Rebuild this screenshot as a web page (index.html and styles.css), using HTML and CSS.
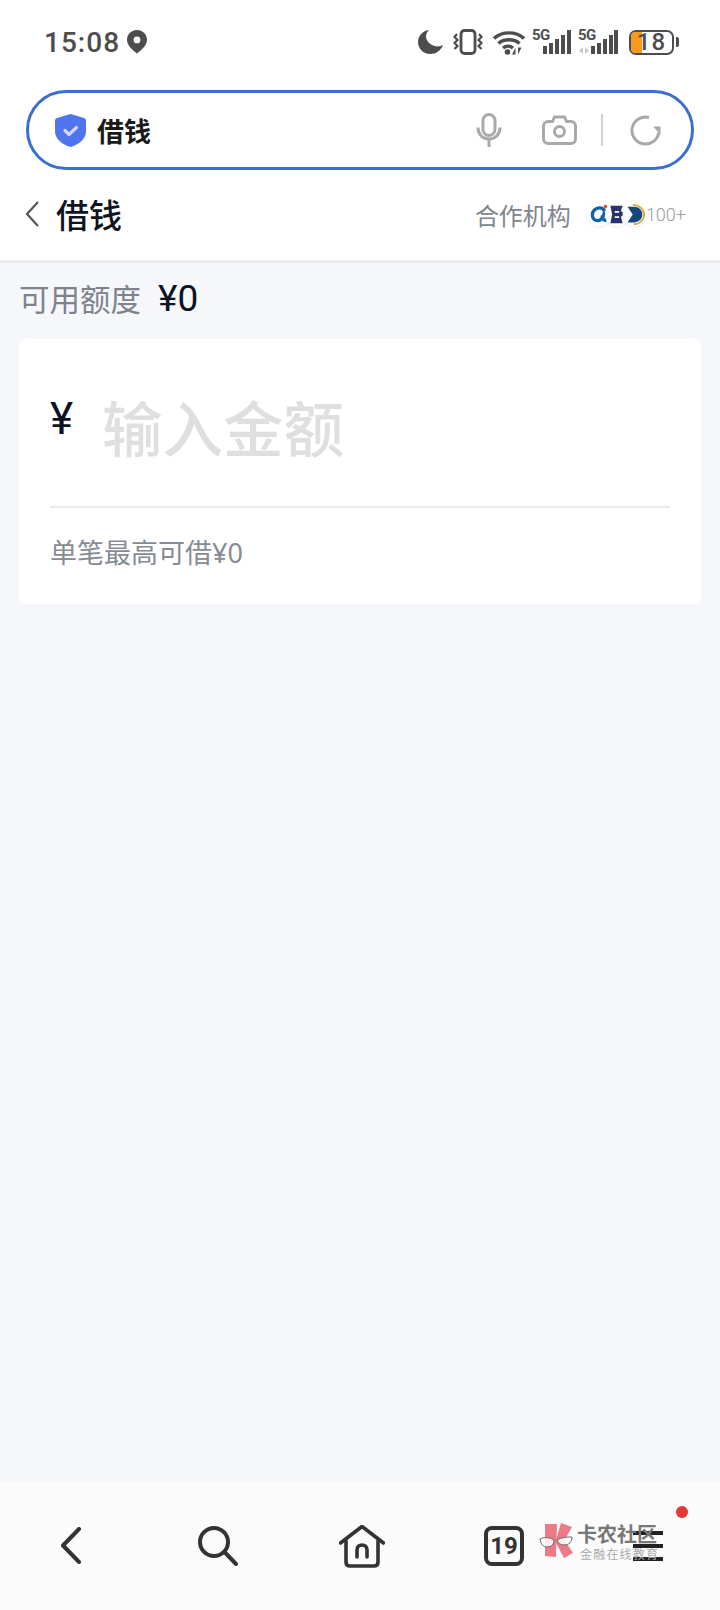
FILE: index.html
```html
<!DOCTYPE html>
<html lang="zh-CN">

<head>
    <meta charset="UTF-8">
    <meta name="viewport" content="width=device-width, initial-scale=1.0">
    <title>借钱</title>
    <link rel="stylesheet" href="styles.css">
</head>

<body>
    <div class="top-area">
        <!-- 状态栏 -->
        <div class="status-bar">
            <div class="status-left">
                <span class="clock">15:08</span>
                <svg class="pin" width="20" height="24" viewBox="0 0 20 24">
                    <path fill="#4d4d4d" fill-rule="evenodd" d="M10 0C4.500 0 0 4.300 0 9.800c0 6 6.200 10.600 10 13.800 3.800-3.200 10-7.800 10-13.800C20 4.300 15.500 0 10 0zm0 6.500a3.400 3.400 0 1 1 0 6.800 3.400 3.400 0 0 1 0-6.800z"/>
                </svg>
            </div>
            <div class="status-right">
                <svg class="moon" width="26" height="24" viewBox="0 0 26 24">
                    <path fill="#4d4d4d" d="M11 0C4.800.8 0 5.800 0 12c0 6.600 5.400 12 12 12 6 0 11-3.400 13-9-1.800 1-3.800 1.500-5.800 1.400C12.600 16.200 8 10.800 8 6.500 8 4 9.200 1.800 11 0z"/>
                </svg>
                <svg class="vibrate" width="30" height="26" viewBox="0 0 30 26">
                    <rect x="8" y="1.500" width="14" height="23" rx="3.500" fill="none" stroke="#4d4d4d" stroke-width="2.800"/>
                    <path fill="none" stroke="#4d4d4d" stroke-width="2.200" d="M4 5 1.500 8 4.500 11 1.500 14 4.500 17 1.500 20M26 5l2.500 3-3 3 3 3-3 3 3 3"/>
                </svg>
                <svg class="wifi" width="32" height="25" viewBox="0 0 32 25">
                    <g fill="none" stroke="#4d4d4d" stroke-width="3.400">
                        <path d="M1 8.500C9 1 23 1 31 8.500"/>
                        <path d="M5.500 13.500C11 8.500 21 8.500 26.500 13.500"/>
                        <path d="M10 18c3-2.500 7-2.500 10 0"/>
                    </g>
                    <circle cx="14.500" cy="22" r="2.800" fill="#4d4d4d"/>
                    <path fill="#4d4d4d" d="M22.500 24.500v-7l-3.500 7zM25 17.500v7l3.500-7z"/>
                </svg>
                <div class="signal">
                    <span class="sim-label">5G</span>
                    <svg width="39" height="25" viewBox="0 0 39 25">
                        <g fill="#4d4d4d">
                            <rect x="10" y="16" width="4" height="8"/>
                            <rect x="16" y="13" width="4" height="11"/>
                            <rect x="22" y="9" width="4" height="15"/>
                            <rect x="28" y="5" width="4" height="19"/>
                            <rect x="34" y="0" width="4" height="24"/>
                        </g>
                    </svg>
                </div>
                <div class="signal">
                    <span class="sim-label">5G</span>
                    <svg width="42" height="25" viewBox="0 0 42 25">
                        <path fill="#c9c9c9" d="M7 17v7l-4-3.500zM9 17v7l4-3.500z"/>
                        <g fill="#4d4d4d">
                            <rect x="15" y="16" width="4" height="8"/>
                            <rect x="21" y="13" width="4" height="11"/>
                            <rect x="27" y="9" width="4" height="15"/>
                            <rect x="33" y="5" width="4" height="19"/>
                            <rect x="38" y="0" width="4" height="24"/>
                        </g>
                    </svg>
                </div>
                <div class="battery">
                    <div class="battery-body">
                        <span class="battery-fill"></span>
                        <span class="battery-num">18</span>
                    </div>
                    <span class="battery-cap"></span>
                </div>
            </div>
        </div>

        <!-- 搜索框 -->
        <div class="search-box">
            <svg class="shield" width="31" height="33" viewBox="0 0 31 33">
                <path fill="#5073ee" d="M15.500 0 29 4c1.300.4 2 1.300 2 2.600V17c0 8-7 13.500-15.500 16C7 30.500 0 25 0 17V6.600C0 5.300.7 4.400 2 4z"/>
                <path fill="none" stroke="#cfd8fb" stroke-width="3.200" stroke-linecap="round" stroke-linejoin="round" d="M10 16.500l4 4 7.500-7"/>
            </svg>
            <span class="search-text">借钱</span>
            <svg class="mic" width="26" height="34" viewBox="0 0 26 34">
                <g fill="none" stroke="#a9a9a9" stroke-width="3">
                    <rect x="7" y="1.500" width="12" height="21" rx="6"/>
                    <path d="M2 14.500C2 21 6.500 26 13 26s11-5 11-11.500M13 26v8"/>
                </g>
            </svg>
            <svg class="camera" width="35" height="30" viewBox="0 0 35 30">
                <g fill="none" stroke="#a9a9a9" stroke-width="3">
                    <path d="M6 6.500h4.500l2-4.500h10l2 4.500H29c2.500 0 4.500 2 4.500 4.500v13c0 2.500-2 4.500-4.500 4.500H6c-2.500 0-4.500-2-4.500-4.500V11c0-2.500 2-4.500 4.500-4.500z"/>
                    <circle cx="17.500" cy="16.500" r="5"/>
                </g>
            </svg>
            <span class="search-divider"></span>
            <svg class="refresh" width="31" height="31" viewBox="0 0 31 31">
                <path fill="none" stroke="#a9a9a9" stroke-width="3" d="M19 2.500A13.500 13.500 0 1 0 28.800 17.500"/>
                <path fill="#a9a9a9" d="M30.500 11.500v8l-7.500-8z"/>
            </svg>
        </div>

        <!-- 标题栏 -->
        <div class="title-bar">
            <svg class="title-back" width="14" height="26" viewBox="0 0 14 26">
                <path fill="none" stroke="#555" stroke-width="2.200" d="M13 1 2 13l11 12"/>
            </svg>
            <h1 class="title">借钱</h1>
            <span class="partner-label">合作机构</span>
            <div class="partner-logos">
                <span class="logo-dot">
                    <svg width="21" height="21" viewBox="0 0 24 24">
                        <path fill="none" stroke="#0f62ac" stroke-width="3.800" d="M19 8.500c-1-3-3.500-4-6-4C8.500 4.500 5 8 5 12.500s3 6.500 6 6.500c4 0 6.500-4 8-10M16 13c.5 4 2 6 5 6"/>
                        <circle cx="20" cy="3" r="2.200" fill="#e0562c"/>
                    </svg>
                </span>
                <span class="logo-dot">
                    <svg width="21" height="21" viewBox="0 0 24 24">
                        <path fill="#26336f" d="M5 2h14l-2 6 2 1.500V13l-2 1.500 2 7.500H5l2-10z"/>
                        <path fill="#fff" d="M10 8h5v2h-5zM10 14h5v2h-5z"/>
                    </svg>
                </span>
                <span class="logo-dot">
                    <svg width="21" height="21" viewBox="0 0 24 24">
                        <path fill="none" stroke="#dba93a" stroke-width="2" d="M10 1c7 0 13 5 13 11s-5 11-12 11"/>
                        <path fill="#14467f" d="M4 3h7c6 0 10 4 10 9s-4 9-10 9H4l6-9z"/>
                    </svg>
                </span>
            </div>
            <span class="partner-count">100+</span>
        </div>
    </div>

    <div class="main">
        <div class="quota-row">
            <span class="quota-label">可用额度</span>
            <span class="quota-num">¥0</span>
        </div>

        <div class="card">
            <div class="amount-row">
                <span class="amount-sign">¥</span>
                <span class="amount-hint">输入金额</span>
            </div>
            <p class="limit-text">单笔最高可借¥0</p>
        </div>
    </div>

    <!-- 底部工具栏 -->
    <div class="toolbar">
        <svg class="tool-back" width="22" height="38" viewBox="0 0 22 38">
            <path fill="none" stroke="#333" stroke-width="4" stroke-linecap="round" stroke-linejoin="round" d="M19 2 3 18.500 19 35"/>
        </svg>
        <svg class="tool-search" width="40" height="40" viewBox="0 0 40 40">
            <g fill="none" stroke="#333" stroke-width="4">
                <circle cx="16" cy="16" r="14"/>
                <path stroke-linecap="round" d="M26.500 26 38 38"/>
            </g>
        </svg>
        <svg class="tool-home" width="46" height="43" viewBox="0 0 46 43">
            <g fill="none" stroke="#333" stroke-width="3.600" stroke-linecap="round" stroke-linejoin="round">
                <path d="M1.500 18 23 1.500 44.500 18"/>
                <path d="M7 16v21c0 2.500 1.500 4 4 4h24c2.500 0 4-1.500 4-4V16"/>
                <path d="M18 32v-7c0-3 2-5 5-5s5 2 5 5v7"/>
            </g>
        </svg>
        <div class="tool-tabs">19</div>
        <div class="tool-menu">
            <span></span>
            <span></span>
            <span></span>
        </div>

        <!-- 水印 -->
        <div class="watermark">
            <svg width="38" height="36" viewBox="0 0 38 36">
                <path fill="#ec7a87" d="M6 1h12l-1 33-11-1z"/>
                <path fill="#ec7a87" d="M22 0l11 4-9 16H16zM16 18h10l8 12-9 5z"/>
                <g fill="#fff" fill-opacity="0.85" stroke="#666" stroke-width="1">
                    <path d="M1 16c4-2 9-2 14 1 0 4-2 7-7 7-4 0-6-3-7-8z"/>
                    <path d="M18 17c5-3 10-3 15-3 0 5-3 8-8 8-4 0-6-2-7-5z"/>
                </g>
            </svg>
            <div class="watermark-text">
                <span class="watermark-name">卡农社区</span>
                <span class="watermark-sub">金融在线教育</span>
            </div>
        </div>
        <span class="red-dot"></span>
    </div>
</body>

</html>
```

FILE: styles.css
```css
* {
    box-sizing: border-box;
}

body {
    font-family: "Noto Sans", "Noto Sans CJK SC", sans-serif;
    background-color: #f5f7fb;
    margin: 0;
    width: 720px;
    height: 1610px;
    display: flex;
    flex-direction: column;
    overflow: hidden;
}

svg {
    display: block;
    flex-shrink: 0;
}

.top-area {
    background-color: #fff;
}

/* 状态栏 */
.status-bar {
    height: 90px;
    display: flex;
    justify-content: space-between;
    padding: 29px 41px 0 44px;
}

.status-left {
    display: flex;
    align-items: center;
    height: 26px;
}

.clock {
    font-family: Roboto, sans-serif;
    font-weight: 500;
    font-size: 28px;
    letter-spacing: 1px;
    color: #4d4d4d;
}

.pin {
    margin-left: 7px;
}

.status-right {
    display: flex;
    align-items: flex-start;
    height: 26px;
}

.moon {
    margin: 1px 9px 0 0;
}

.vibrate {
    margin-right: 10px;
}

.wifi {
    margin: 1px 7px 0 0;
}

.signal {
    position: relative;
    width: 40px;
    height: 26px;
    margin-right: 6px;
}

.signal svg {
    position: absolute;
    right: 0;
    top: 1px;
}

.sim-label {
    position: absolute;
    left: 0;
    top: 0;
    font-family: Roboto, sans-serif;
    font-weight: 700;
    font-size: 15px;
    line-height: 13px;
    letter-spacing: -0.5px;
    color: #4d4d4d;
}

.battery {
    display: flex;
    align-items: center;
    height: 26px;
    margin-left: 5px;
}

.battery-body {
    position: relative;
    width: 45px;
    height: 25px;
    border: 2.500px solid #4d4d4d;
    border-radius: 7px;
    display: flex;
    align-items: center;
    justify-content: center;
}

.battery-fill {
    position: absolute;
    left: 0;
    top: 0;
    bottom: 0;
    width: 11px;
    background-color: #f79a1e;
    border-radius: 4px 0 0 4px;
}

.battery-num {
    position: relative;
    font-family: Roboto, sans-serif;
    font-weight: 500;
    font-size: 24px;
    line-height: 20px;
    letter-spacing: 1px;
    color: #4d4d4d;
}

.battery-cap {
    width: 3px;
    height: 10px;
    margin-left: 2px;
    background-color: #4d4d4d;
    border-radius: 0 2px 2px 0;
}

/* 搜索框 */
.search-box {
    height: 80px;
    margin: 0 26px;
    background-color: #fff;
    border: 3px solid #3a70cc;
    border-radius: 40px;
    display: flex;
    align-items: center;
    padding: 0 30px 0 26px;
}

.search-text {
    flex: 1;
    margin-left: 11px;
    font-size: 27px;
    font-weight: 700;
    color: #1a1a1a;
}

.camera {
    margin-left: 40px;
}

.search-divider {
    width: 2px;
    height: 32px;
    margin: 0 27px 0 24px;
    background-color: #d2d2d2;
}

/* 标题栏 */
.title-bar {
    height: 93px;
    border-bottom: 3px solid #e9eaee;
    display: flex;
    align-items: center;
    padding: 0 34px 2px 25px;
}

.title {
    flex: 1;
    margin: 0 0 0 17px;
    font-size: 33px;
    font-weight: 500;
    color: #0f1420;
}

.partner-label {
    font-size: 24px;
    color: #80858f;
}

.partner-logos {
    display: flex;
    margin-left: 16px;
}

.logo-dot {
    width: 24px;
    height: 24px;
    border-radius: 50%;
    background-color: #fff;
    box-shadow: 0 1px 3px rgba(0, 0, 0, 0.08);
    display: flex;
    align-items: center;
    justify-content: center;
    margin-right: -6px;
}

.partner-count {
    margin-left: 5px;
    font-family: Roboto, sans-serif;
    font-weight: 300;
    font-size: 18px;
    color: #9a9da3;
}

/* 内容区 */
.main {
    flex: 1;
    padding: 0 19px;
}

.quota-row {
    height: 76px;
    display: flex;
    align-items: center;
    padding: 0 0 6px 0;
}

.quota-label {
    font-size: 30.500px;
    color: #7d828c;
}

.quota-num {
    margin-left: 17px;
    font-family: Roboto, sans-serif;
    font-size: 37px;
    color: #0c1424;
}

.card {
    height: 265px;
    background-color: #fff;
    border-radius: 8px;
    padding: 0 31px;
}

.amount-row {
    height: 169px;
    padding-top: 6px;
    border-bottom: 2px solid #e9e9eb;
    display: flex;
    align-items: center;
}

.amount-sign {
    width: 52px;
    font-family: Roboto, sans-serif;
    font-size: 44px;
    margin-bottom: 14px;
    color: #0c1424;
}

.amount-hint {
    font-size: 60.500px;
    font-weight: 500;
    color: #dedfe1;
}

.limit-text {
    margin: 24px 0 0;
    font-size: 27px;
    color: #878b93;
}

/* 底部工具栏 */
.toolbar {
    position: relative;
    height: 128px;
    background-color: #fbfbfb;
    display: flex;
    align-items: center;
    padding-left: 60px;
}

.tool-search {
    margin-left: 116px;
}

.tool-home {
    margin-left: 101px;
}

.tool-tabs {
    width: 40px;
    height: 40px;
    margin-left: 99px;
    border: 4px solid #333;
    border-radius: 8px;
    display: flex;
    align-items: center;
    justify-content: center;
    font-family: Roboto, sans-serif;
    font-weight: 700;
    font-size: 24px;
    color: #333;
}

.tool-menu {
    width: 30px;
    margin-left: 109px;
    display: flex;
    flex-direction: column;
    gap: 9px;
}

.tool-menu span {
    height: 4px;
    background-color: #222;
}

.watermark {
    position: absolute;
    left: 539px;
    top: 41px;
    display: flex;
    align-items: flex-start;
}

.watermark-text {
    display: flex;
    flex-direction: column;
    align-items: flex-start;
    margin: 2px 0 0 0;
}

.watermark-name {
    font-size: 20px;
    line-height: 20px;
    font-weight: 700;
    color: #777;
}

.watermark-sub {
    font-size: 12px;
    line-height: 14px;
    letter-spacing: 1.200px;
    margin: 0 0 0 3px;
    padding-top: 3px;
    color: #aaa;
}

.red-dot {
    position: absolute;
    left: 676px;
    top: 24px;
    width: 12px;
    height: 12px;
    border-radius: 50%;
    background-color: #e53935;
}
```
